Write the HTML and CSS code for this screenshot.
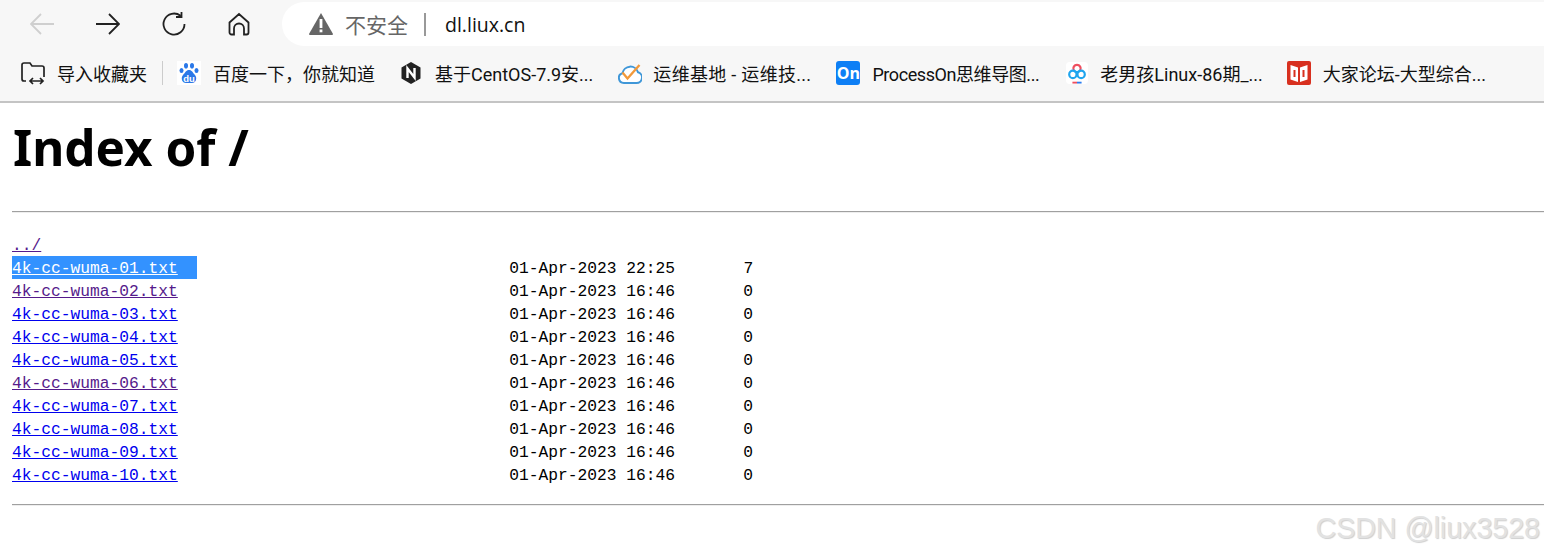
FILE: index.html
```html
<!DOCTYPE html>
<html lang="zh">
<head>
<meta charset="utf-8">
<title>Index of /</title>
<link rel="stylesheet" href="styles.css">
</head>
<body>
<header class="chrome">
  <div class="toolbar">
    <div class="nav">
      <svg class="nav-icon" viewBox="0 0 24 24"><path class="disabled" d="M24 12H1M11 2 1 12l10 10"/></svg>
      <svg class="nav-icon" viewBox="0 0 24 24"><path d="M0 12h23M13 2l10 10-10 10"/></svg>
      <svg class="nav-icon" viewBox="0 0 24 24"><path d="M22.500 12A10.500 10.500 0 1 1 18.500 3.800M19.500 0v5h-5.500"/></svg>
      <svg class="nav-icon home" viewBox="0 0 24 24"><path d="M7 22.500H4.500a2 2 0 0 1-2-2V10.500L12 2l9.500 8.500v10a2 2 0 0 1-2 2H17v-6a5 5 0 0 0-10 0z"/></svg>
    </div>
    <div class="omnibox">
      <svg class="warn" viewBox="0 0 24 22"><path d="M12 0 24 21a1 1 0 0 1-1 1H1a1 1 0 0 1-1-1z" fill="#666"/><rect x="10.600" y="6" width="2.800" height="9" fill="#fff"/><rect x="10.600" y="16.500" width="2.800" height="2.800" fill="#fff"/></svg>
      <span class="insecure">不安全</span>
      <span class="omni-sep"></span>
      <span class="url">dl.liux.cn</span>
    </div>
  </div>
  <nav class="bookmarks">
    <a class="bm bm-import">
      <svg class="fav" viewBox="0 0 24 24"><path class="line" d="M5 20H3a2 2 0 0 1-2-2V4a2 2 0 0 1 2-2h6l2 3h10a2 2 0 0 1 2 2v9"/><path class="line" d="M9 21h13M12 18l-3 3 3 3M19 18l3 3-3 3" transform="translate(0 -1)"/></svg>
      <span>导入收藏夹</span>
    </a>
    <span class="bm-sep"></span>
    <a class="bm bm-baidu">
      <svg class="fav" viewBox="0 0 24 24"><rect width="24" height="24" fill="#fff"/><g fill="#2b78e8"><ellipse cx="4.500" cy="9.500" rx="2" ry="2.600"/><ellipse cx="9" cy="4.800" rx="2" ry="2.800"/><ellipse cx="15" cy="4.800" rx="2" ry="2.800"/><ellipse cx="19.500" cy="9.500" rx="2" ry="2.600"/><path d="M12 9c3 0 3.500 2.500 6 5 2.500 3 1 8-3 8H9c-4 0-5.500-5-3-8 2.500-2.500 3-5 6-5z"/></g><text class="du" x="12" y="20.500">du</text></svg>
      <span>百度一下，你就知道</span>
    </a>
    <a class="bm bm-nginx">
      <svg class="fav fav-n" viewBox="0 0 20 24"><path d="M10 1 19.500 6.500v11L10 23 .5 17.500v-11z" fill="#222"/><path d="M6.500 17V7.500L13.500 16.500V7" fill="none" stroke="#fff" stroke-width="2.400"/></svg>
      <span>基于CentOS-7.9安...</span>
    </a>
    <a class="bm bm-ops">
      <svg class="fav" viewBox="0 0 24 24"><path d="M6 22a5 5 0 0 1-1.500-9.800 8 8 0 0 1 15.500-1A5.500 5.500 0 0 1 18.500 22z" fill="#fff" stroke="#3f97d8" stroke-width="2"/><path d="M4.500 11.500l5 6L21.500 4" fill="none" stroke="#f2993a" stroke-width="2.300"/></svg>
      <span>运维基地 - 运维技...</span>
    </a>
    <a class="bm bm-on">
      <span class="fav on-logo">On</span>
      <span>ProcessOn思维导图...</span>
    </a>
    <a class="bm bm-old">
      <svg class="fav fav-old" viewBox="0 0 24 24"><rect width="24" height="24" rx="4" fill="#fff"/><g fill="none" stroke-width="2.400"><path d="M8.500 9a4 4 0 1 1 7 0" stroke="#ef4f5f"/><path d="M8.500 9a4 4 0 0 0 7 0" stroke="#1fa5ee"/><circle cx="7.500" cy="13.500" r="4" stroke="#1fa5ee"/><circle cx="16.500" cy="13.500" r="4" stroke="#1fa5ee"/></g><rect x="7" y="21.500" width="5" height="2" fill="#ef4f5f"/><rect x="12" y="21.500" width="5" height="2" fill="#2a7df0"/></svg>
      <span>老男孩Linux-86期_...</span>
    </a>
    <a class="bm bm-dj">
      <svg class="fav" viewBox="0 0 24 24"><rect width="24" height="24" rx="2" fill="#d8301f"/><path d="M3.500 4l7.500 2.500V21l-7.500-2.500zM20.500 4L13 6.500V21l7.500-2.500z" fill="#fff"/><path d="M6.500 9h2v7h-2zM15.500 9h2v7h-2z" fill="#d8301f"/></svg>
      <span>大家论坛-大型综合...</span>
    </a>
  </nav>
</header>
<main class="page">
  <h1 class="title">Index of /</h1>
  <hr class="rule rule-top">
  <pre class="listing"><a class="visited" href="#">../</a>
<span class="selected"><a class="plain" href="#">4k-cc-wuma-01.txt</a>  </span>                                01-Apr-2023 22:25       7
<a class="visited" href="#">4k-cc-wuma-02.txt</a>                                  01-Apr-2023 16:46       0
<a href="#">4k-cc-wuma-03.txt</a>                                  01-Apr-2023 16:46       0
<a href="#">4k-cc-wuma-04.txt</a>                                  01-Apr-2023 16:46       0
<a href="#">4k-cc-wuma-05.txt</a>                                  01-Apr-2023 16:46       0
<a class="visited" href="#">4k-cc-wuma-06.txt</a>                                  01-Apr-2023 16:46       0
<a href="#">4k-cc-wuma-07.txt</a>                                  01-Apr-2023 16:46       0
<a href="#">4k-cc-wuma-08.txt</a>                                  01-Apr-2023 16:46       0
<a href="#">4k-cc-wuma-09.txt</a>                                  01-Apr-2023 16:46       0
<a href="#">4k-cc-wuma-10.txt</a>                                  01-Apr-2023 16:46       0
</pre>
  <hr class="rule rule-bottom">
</main>
<div class="watermark">CSDN @liux3528</div>
</body>
</html>
```
FILE: styles.css
```css
* { box-sizing: border-box; }
html, body { margin: 0; height: 100%; overflow: hidden; background: #fff; }
body { position: relative; font-family: "Noto Sans", "Noto Sans CJK SC", sans-serif; color: #000; }

.chrome { background: #f7f7f7; border-bottom: 2px solid #c4c4c4; height: 103px; }
.toolbar { display: flex; align-items: center; height: 47px; padding: 1px 0 0 30px; }
.nav { display: flex; align-items: center; gap: 42px; width: 252px; }
.nav-icon { width: 24px; height: 24px; flex: none; fill: none; stroke: #222; stroke-width: 1.800; }
.nav-icon .disabled { stroke: #cfcfcf; }
.home { margin-left: -1px; }
.omnibox { flex: 1; height: 44px; display: flex; align-items: center; background: #fff; border-radius: 22px 0 0 22px; padding-left: 27px; }
.warn { width: 24px; height: 22px; flex: none; margin-right: 12px; }
.insecure { font-size: 21px; color: #666; font-family: "Noto Sans CJK SC", sans-serif; }
.omni-sep { width: 2px; height: 23px; background: #999; margin: 0 19px 0 16px; }
.url { font-size: 19.500px; color: #111; font-family: "Open Sans", sans-serif; }

.bookmarks { display: flex; align-items: center; height: 54px; padding: 0 0 2px 21px; font-size: 18px; color: #111; font-family: Roboto, "Noto Sans CJK SC", sans-serif; }
.bm { display: flex; align-items: center; gap: 12px; white-space: nowrap; margin-right: 25px; }
.fav { width: 24px; height: 24px; flex: none; }
.fav-n { width: 20px; }
.fav-old { width: 22px; }
.bm-nginx { gap: 14px; margin-left: 1px; }
.bm-ops { gap: 11px; letter-spacing: .3px; }
.bm-on { letter-spacing: -.42px; margin-right: 27px; }
.bm-on .on-logo { letter-spacing: 0; }
.bm-old { gap: 12px; margin-right: 24px; }
.line { fill: none; stroke: #222; stroke-width: 1.700; }
.du { fill: #fff; font: 700 9.500px "Liberation Sans", sans-serif; text-anchor: middle; }
.bm-sep { width: 1px; height: 24px; background: #ccc; margin: 0 14px 0 -10px; }
.on-logo { display: flex; align-items: center; justify-content: center; background: #0e7ff5; color: #fff; font-weight: 700; font-size: 16px; border-radius: 3px; font-family: "Open Sans", sans-serif; }

.page { padding: 0 0 0 12px; }
.title { margin: 12px 0 0 1px; font-size: 49.400px; line-height: 64px; font-weight: 700; font-family: "Noto Sans", sans-serif; }
.rule { border: 0; border-top: 1px solid #a0a0a0; border-bottom: 1px solid #eee; height: 2px; margin: 0; }
.rule-top { margin-top: 32px; }
.listing { margin: 21px 0 0; font-family: "Liberation Mono", monospace; font-size: 16.250px; line-height: 23px; }
.listing a { color: #0000ee; }
.listing a.visited { color: #551a8b; }
.listing a.plain { color: #fff; }
.selected { background: linear-gradient(#3392ff, #3392ff) 0 0 / 100% 22px no-repeat; box-shadow: 0 -1px 0 #3392ff; color: #fff; display: inline-block; }
.rule-bottom { margin-top: 17px; }

.watermark { position: absolute; right: 4px; top: 512px; font-family: "Liberation Sans", sans-serif; font-size: 28.600px; color: #e2e2e2; text-shadow: 1px 1px 1px #cfcfcf; white-space: nowrap; }
```
